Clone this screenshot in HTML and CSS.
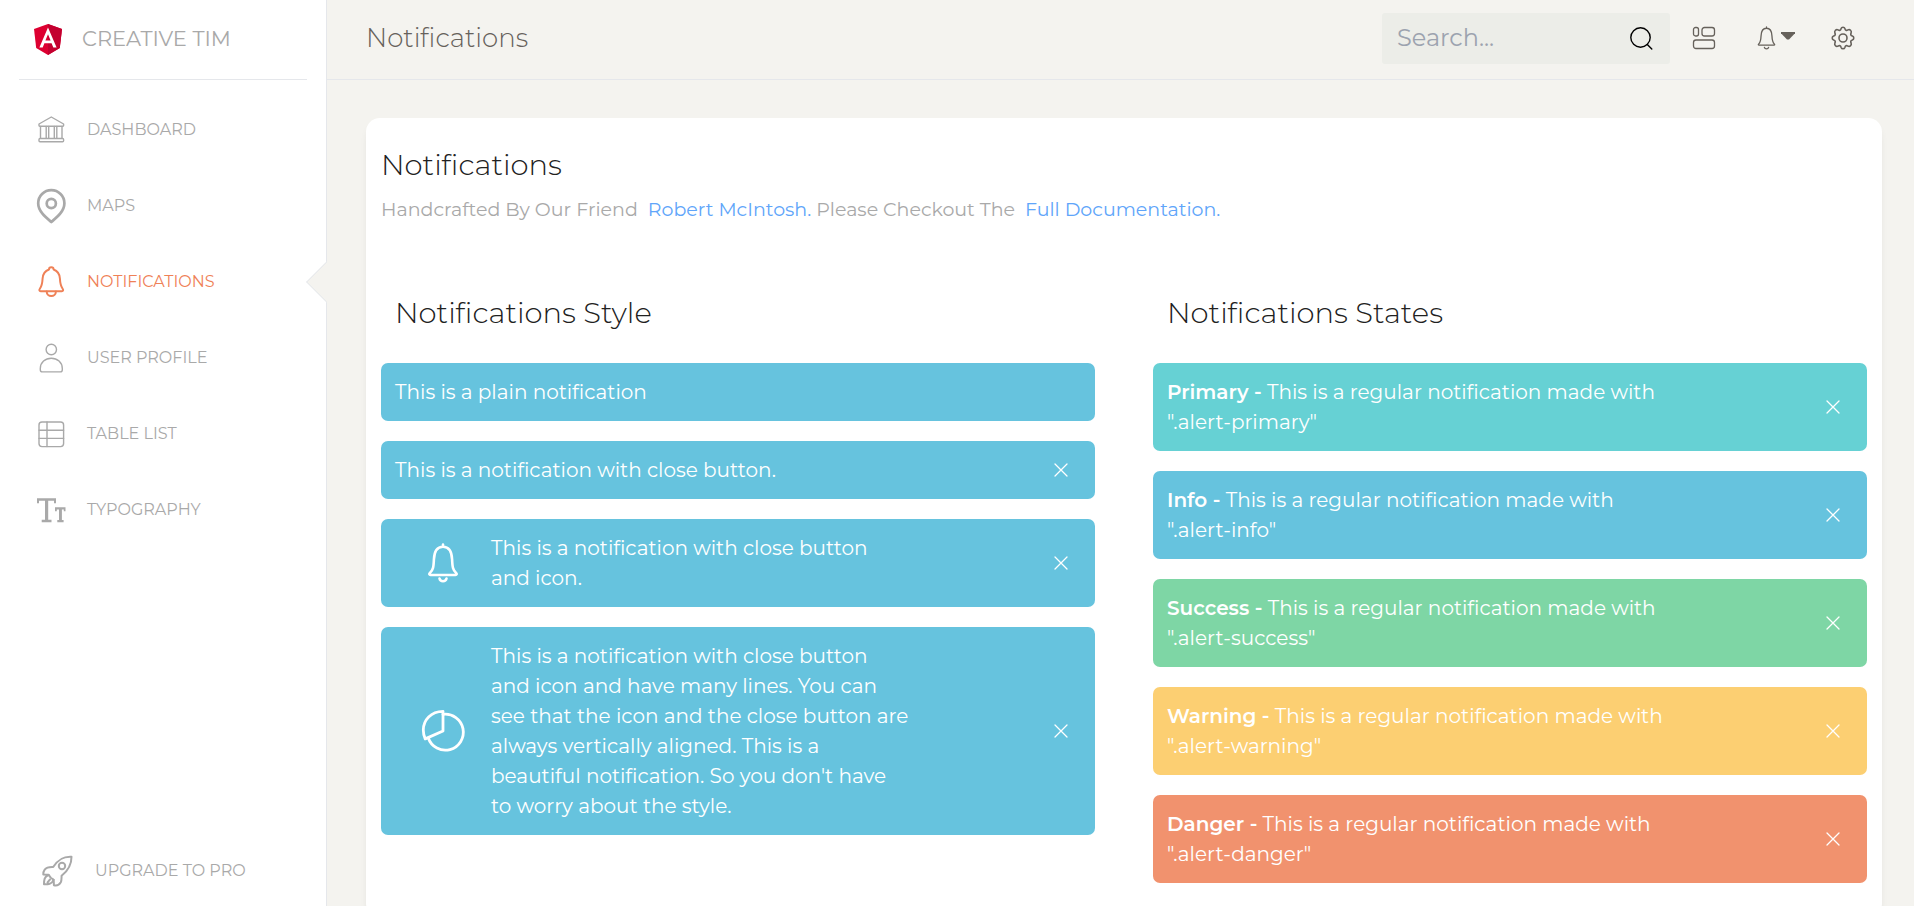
FILE: index.html
```html
<!DOCTYPE html>
<html lang="en">
<head>
<meta charset="utf-8">
<meta name="viewport" content="width=device-width, initial-scale=1">
<title>Notifications</title>
<link rel="stylesheet" href="styles.css">
</head>
<body>
<svg class="sprite" aria-hidden="true">
  <symbol id="i-bell" viewBox="0 0 36 36">
    <path d="M16 5.500a2.300 2.300 0 0 1 4.600 0c3.900 1.400 6 4.500 6.300 9 .3 5.200.8 7.500 2.600 10 1.200 1.600.6 2.700-.7 2.700H7.700c-1.300 0-1.900-1.100-.7-2.700 1.800-2.500 2.300-4.800 2.600-10 .3-4.500 2.400-7.600 6.400-9z"/>
    <path d="M13.700 27.500a4.600 4.600 0 0 0 9.200 0"/>
  </symbol>
  <symbol id="i-bell-thin" viewBox="0 0 30 40">
    <path d="M15 1.500v2M2.500 32C1.300 32 1 31 1.800 30.200 5 27 5.600 24.500 5.900 16.500 6.200 8.500 9.500 3.700 15 3.700s8.800 4.800 9.100 12.800c.3 8 .9 10.500 4.100 13.700.8.8.5 1.800-.7 1.800z"/>
    <path d="M11.500 35.500a3.600 3.600 0 0 0 7 0"/>
  </symbol>
  <symbol id="i-close" viewBox="0 0 14 14"><path d="M1 1l12 12M13 1L1 13"/></symbol>
</svg>

<div class="shell">
  <aside class="sidebar">
    <a class="brand" href="#">
      <svg class="brand-logo" viewBox="0 0 28 31" aria-hidden="true">
        <path fill="#dd0031" d="M14 0L0 5l2.200 19L14 31l11.800-7L28 5z"/>
        <path fill="#c3002f" d="M14 0v31l11.800-7L28 5z"/>
        <path fill="#fff" d="M14 3.600L5.400 23.500h3.300l1.700-4.300h7.200l1.700 4.300h3.300zm2.600 13h-5.200L14 10.200z"/>
      </svg>
      <span>CREATIVE TIM</span>
    </a>
    <nav class="menu">
      <a class="menu-item" href="#">
        <svg class="menu-icon thin" viewBox="0 0 36 36" aria-hidden="true">
          <path d="M6 12L18.300 5l12.300 7v1.500c0 .4-.3.700-.7.700H6.700c-.4 0-.7-.3-.7-.7z"/>
          <path d="M7.500 14.500V26M13.200 14.500V26M15.700 14.500V26M21.300 14.500V26M23.800 14.500V26M29 14.500V26"/>
          <rect x="6" y="26.500" width="24.600" height="3.200" rx="1"/>
        </svg>DASHBOARD</a>
      <a class="menu-item" href="#">
        <svg class="menu-icon heavy" viewBox="0 0 36 36" aria-hidden="true">
          <path d="M18.300 34C13 29.500 5.200 23.500 5.200 15.300a13.100 13.100 0 0 1 26.200 0c0 8.200-7.800 14.200-13.100 18.700z"/>
          <circle cx="18.300" cy="15.500" r="4.600"/>
        </svg>MAPS</a>
      <a class="menu-item active" href="#" aria-current="page">
        <svg class="menu-icon medium" aria-hidden="true"><use href="#i-bell"/></svg>NOTIFICATIONS</a>
      <a class="menu-item" href="#">
        <svg class="menu-icon thin" viewBox="0 0 36 36" aria-hidden="true">
          <circle cx="18.300" cy="9.500" r="5.200"/>
          <path d="M18.300 18.200c6 0 11 4.300 11 10.300v1.200c0 1.300-.9 2.200-2.200 2.200H9.500c-1.300 0-2.200-.9-2.200-2.200v-1.200c0-6 5-10.300 11-10.300z"/>
        </svg>USER PROFILE</a>
      <a class="menu-item" href="#">
        <svg class="menu-icon thin" viewBox="0 0 36 36" aria-hidden="true">
          <rect x="6" y="6" width="24.600" height="24.600" rx="3"/>
          <path d="M14 6v24.600M6 14.200h24.600M6 22.400h24.600"/>
        </svg>TABLE LIST</a>
      <a class="menu-item" href="#">
        <svg class="menu-icon solid" viewBox="0 0 36 36" aria-hidden="true">
          <path d="M4 6.200h19v5h-2V8.700h-5.800v19h3.300v2.500H8.700v-2.500H12v-19H6v2.500H4z"/>
          <path d="M22 15.200h10.500v4h-1.700v-1.700h-1.900v10.500h1.700v2.200h-6.300V28H26V17.500h-2.200v1.700H22z"/>
        </svg>TYPOGRAPHY</a>
    </nav>
    <a class="menu-item upgrade" href="#">
      <svg class="menu-icon medium" viewBox="0 0 36 36" aria-hidden="true">
        <path d="M32.500 3.700C24 3.200 19 6.500 14.200 14c-4-.2-6.700.2-8.500 2.700C4.300 18.700 4 20 4.300 21.500l5.200.2 2.200 3 3 2.100.2 5.500c3 .8 5.500-.6 6.900-3 .9-1.900.7-4.300.8-6.500 7.400-6 10-11.800 9.900-19.100z"/>
        <circle cx="23" cy="13" r="3.200"/>
        <path d="M11 26.500l-2.500 2.800M9.500 22c-4.500 1.500-4.400 5.500-4.500 9.300 4 .1 8 .1 9.500-4.500"/>
      </svg>UPGRADE TO PRO</a>
  </aside>

  <div class="page">
    <header class="topbar">
      <h1 class="page-title">Notifications</h1>
      <form class="search" role="search">
        <input class="search-input" type="text" placeholder="Search..." aria-label="Search">
        <button class="plain-button search-button" type="button" aria-label="Search">
          <svg class="search-icon" viewBox="0 0 24 24" aria-hidden="true"><circle cx="11.500" cy="11.500" r="9.700"/><path d="M18.300 18.500l4.500 4.500"/></svg>
        </button>
      </form>
      <button class="plain-button" type="button" aria-label="Layout">
        <svg class="top-icon" viewBox="0 0 24 24" aria-hidden="true">
          <rect x="1.500" y="1.500" width="5" height="8.500" rx="2"/>
          <rect x="10" y="1.500" width="12.500" height="8.500" rx="2.500"/>
          <rect x="1.500" y="14" width="21" height="8.500" rx="2.500"/>
        </svg>
      </button>
      <button class="plain-button bell-button" type="button" aria-label="Alerts">
        <svg class="top-bell" aria-hidden="true"><use href="#i-bell-thin"/></svg>
        <svg class="caret" viewBox="0 0 14 8" aria-hidden="true"><path d="M0 0h14v1.200L8 7.500H6L0 1.200z"/></svg>
      </button>
      <button class="plain-button" type="button" aria-label="Settings">
        <svg class="top-icon gear" viewBox="0 0 24 24" aria-hidden="true">
          <circle cx="12" cy="12" r="4"/>
          <path d="M10.100 2.600a2 2 0 0 1 3.800 0c.4 1.700 1.500 2.200 3 1.300 2-1 4 1 3.200 3.100-.8 1.500-.3 2.600 1.300 3.100a2 2 0 0 1 0 3.800c-1.600.5-2.100 1.600-1.300 3.100.8 2.100-1.200 4.100-3.200 3.100-1.500-.9-2.600-.4-3 1.300a2 2 0 0 1-3.800 0c-.4-1.700-1.500-2.200-3-1.300-2 1-4-1-3.200-3.100.8-1.500.3-2.600-1.300-3.100a2 2 0 0 1 0-3.800c1.600-.5 2.100-1.600 1.300-3.100C3.100 4.900 5.100 2.900 7.100 3.900c1.500.9 2.600.4 3-1.300z"/>
        </svg>
      </button>
    </header>

    <main class="content">
      <section class="card">
        <h2 class="heading">Notifications</h2>
        <p class="description">Handcrafted By Our Friend <a class="link" href="#">Robert McIntosh.</a> Please Checkout The <a class="link" href="#">Full Documentation.</a></p>
        <div class="columns">
          <div class="column">
            <h3 class="heading column-heading">Notifications Style</h3>
            <div class="alert info" role="alert"><p class="alert-text">This is a plain notification</p></div>
            <div class="alert info" role="alert"><p class="alert-text">This is a notification with close button.</p>
              <button class="plain-button close" type="button" aria-label="Close"><svg class="close-icon" aria-hidden="true"><use href="#i-close"/></svg></button></div>
            <div class="alert info" role="alert">
              <span class="alert-media"><svg class="alert-bell" aria-hidden="true"><use href="#i-bell-thin"/></svg></span>
              <p class="alert-text">This is a notification with close button<br>and icon.</p>
              <button class="plain-button close" type="button" aria-label="Close"><svg class="close-icon" aria-hidden="true"><use href="#i-close"/></svg></button></div>
            <div class="alert info" role="alert">
              <span class="alert-media"><svg class="alert-pie" viewBox="0 0 42 42" aria-hidden="true">
                <path d="M21 1.300C9 1.300 1.300 10 1.300 20c0 3.300.6 6 1.900 8.900L21 21z"/>
                <path d="M21 4.300A18 18 0 1 1 6.300 28"/></svg></span>
              <p class="alert-text">This is a notification with close button<br>and icon and have many lines. You can<br>see that the icon and the close button are<br>always vertically aligned. This is a<br>beautiful notification. So you don't have<br>to worry about the style.</p>
              <button class="plain-button close" type="button" aria-label="Close"><svg class="close-icon" aria-hidden="true"><use href="#i-close"/></svg></button></div>
          </div>
          <div class="column">
            <h3 class="heading column-heading">Notifications States</h3>
            <div class="alert primary" role="alert"><p class="alert-text"><b>Primary -</b> This is a regular notification made with<br>".alert-primary"</p>
              <button class="plain-button close" type="button" aria-label="Close"><svg class="close-icon" aria-hidden="true"><use href="#i-close"/></svg></button></div>
            <div class="alert info" role="alert"><p class="alert-text"><b>Info -</b> This is a regular notification made with<br>".alert-info"</p>
              <button class="plain-button close" type="button" aria-label="Close"><svg class="close-icon" aria-hidden="true"><use href="#i-close"/></svg></button></div>
            <div class="alert success" role="alert"><p class="alert-text"><b>Success -</b> This is a regular notification made with<br>".alert-success"</p>
              <button class="plain-button close" type="button" aria-label="Close"><svg class="close-icon" aria-hidden="true"><use href="#i-close"/></svg></button></div>
            <div class="alert warning" role="alert"><p class="alert-text"><b>Warning -</b> This is a regular notification made with<br>".alert-warning"</p>
              <button class="plain-button close" type="button" aria-label="Close"><svg class="close-icon" aria-hidden="true"><use href="#i-close"/></svg></button></div>
            <div class="alert danger" role="alert"><p class="alert-text"><b>Danger -</b> This is a regular notification made with<br>".alert-danger"</p>
              <button class="plain-button close" type="button" aria-label="Close"><svg class="close-icon" aria-hidden="true"><use href="#i-close"/></svg></button></div>
          </div>
        </div>
      </section>
    </main>
  </div>
</div>
</body>
</html>
```
FILE: styles.css
```css
*, *::before, *::after { box-sizing: border-box; }
body {
  margin: 0;
  background: #f4f3ef;
  color: #212121;
  font-family: Montserrat, Inter, "Open Sans", sans-serif;
  font-size: 20px;
  line-height: 30px;
}
h1, h2, h3, p { margin: 0; }
h1, h2, h3 { font-weight: 300; }
a { color: inherit; text-decoration: none; }
svg { display: block; flex: none; fill: none; stroke: currentColor; stroke-linecap: round; stroke-linejoin: round; }
.sprite { position: absolute; width: 0; height: 0; }
.plain-button { display: flex; align-items: center; padding: 0; border: 0; background: none; color: inherit; cursor: pointer; }

.shell { display: flex; height: 100vh; overflow: hidden; }

/* Sidebar */
.sidebar {
  display: flex;
  flex-direction: column;
  flex: none;
  width: 327px;
  background: #fff;
  border-right: 1px solid #e5e7eb;
  color: #a9a9a9;
  font-size: 16px;
}
.brand {
  display: flex;
  align-items: center;
  gap: 20px;
  height: 80px;
  margin: 0 19px;
  padding: 0 15px 1px;
  border-bottom: 1px solid #e5e7eb;
  font-size: 21px;
}
.brand-logo { width: 28px; height: 31px; stroke: none; }
.menu { display: flex; flex-direction: column; gap: 16px; padding-top: 20px; }
.menu-item {
  position: relative;
  display: flex;
  align-items: center;
  gap: 18px;
  height: 60px;
  padding-left: 33px;
}
.menu-icon { width: 36px; height: 36px; }
.thin { stroke-width: 1.4; }
.medium { stroke-width: 2; }
.heavy { stroke-width: 2.7; }
.solid { fill: currentColor; stroke: none; }
.active { color: #ef8157; }
.active::after {
  content: "";
  position: absolute;
  top: 15px;
  right: -16px;
  width: 30px;
  height: 30px;
  background: #f4f3ef;
  border-left: 1px solid #e5e7eb;
  border-bottom: 1px solid #e5e7eb;
  transform: rotate(45deg);
  clip-path: polygon(0 0, 100% 100%, 0 100%);
}
.upgrade { margin-top: auto; margin-bottom: 5px; padding-left: 39px; gap: 20px; }

/* Top bar */
.page { display: flex; flex-direction: column; flex: 1; min-width: 0; }
.topbar {
  display: flex;
  align-items: center;
  flex: none;
  height: 80px;
  padding: 0 59px 3px 39px;
  border-bottom: 1px solid #e5e7eb;
  color: #66615b;
}
.page-title { margin-right: auto; font-size: 26px; }
.search {
  display: flex;
  align-items: center;
  width: 288px;
  height: 51px;
  margin-right: 22px;
  padding: 0 17px 0 15px;
  border-radius: 3px;
  background: #ecede8;
}
.search-input {
  flex: 1;
  min-width: 0;
  padding: 0;
  border: 0;
  outline: 0;
  background: none;
  font: inherit;
  font-size: 24px;
}
.search-input::placeholder { color: #9ca3af; opacity: 1; }
.search-button { color: #000; }
.search-icon { width: 24px; height: 24px; stroke-width: 1.4; }
.top-icon { width: 24px; height: 24px; stroke-width: 1.3; }
.gear { stroke-width: 1.6; }
.bell-button { gap: 5px; margin: 0 36px 0 41px; }
.top-bell { width: 19px; height: 24px; stroke-width: 2.2; }
.caret { width: 14px; height: 8px; margin-bottom: 4px; fill: currentColor; stroke: none; }

/* Content */
.content { flex: 1; min-height: 0; padding: 38px 32px 38px 39px; overflow-y: auto; scrollbar-width: none; }
.card {
  padding: 27px 15px 34px;
  border-radius: 14px;
  background: #fff;
  box-shadow: 0 6px 10px -4px rgba(0, 0, 0, .15);
}
.heading { font-size: 29px; line-height: 40px; }
.description { margin: 10px 0 68px; color: #a9a9a9; font-size: 19px; }
.link { margin-left: 5px; color: #60a5fa; }
.columns { display: grid; grid-template-columns: 1fr 1fr; gap: 58px; }
.column { display: flex; flex-direction: column; gap: 20px; }
.column-heading { padding-left: 14px; margin-bottom: 10px; }

.alert { display: flex; align-items: center; padding: 14px 27px 14px 14px; border-radius: 7px; color: #fff; }
.alert-text { flex: 1; }
.alert-text b { font-weight: 600; }
.alert-media { display: flex; justify-content: center; flex: none; width: 96px; }
.alert-bell { width: 30px; height: 40px; stroke-width: 2.6; }
.alert-pie { width: 42px; height: 42px; stroke-width: 2.8; overflow: visible; }
.close-icon { width: 14px; height: 14px; stroke-width: 1.3; }
.primary { background: #66d1d4; }
.info { background: #66c3de; }
.success { background: #7ed6a5; }
.warning { background: #fccf72; }
.danger { background: #f1926e; }
```
